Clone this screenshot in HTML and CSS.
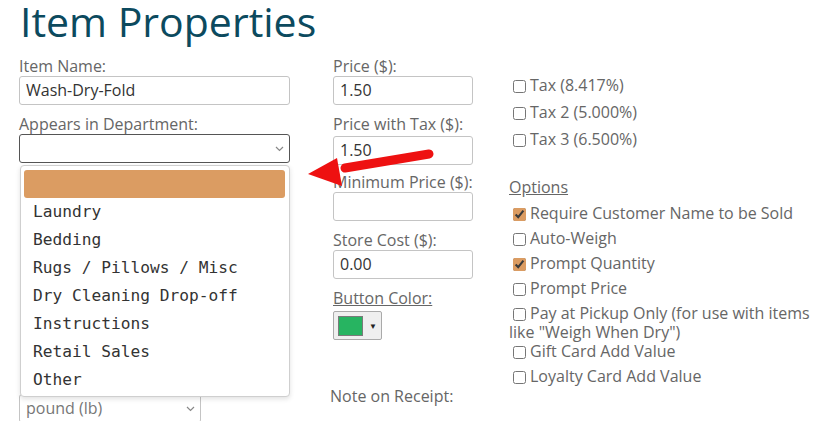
FILE: index.html
```html
<!DOCTYPE html>
<html>
<head>
<meta charset="utf-8">
<link rel="stylesheet" href="styles.css">
</head>
<body>
<div class="page">
  <h1 class="title">Item Properties</h1>
  <div class="grid">
    <div class="col col-left">
      <div class="field">
        <div class="label">Item Name:</div>
        <div class="input wide">Wash-Dry-Fold</div>
      </div>
      <div class="field dept">
        <div class="label">Appears in Department:</div>
        <div class="input wide select focused">
          <span></span>
          <svg class="chev" width="9" height="6" viewBox="0 0 9 6"><path d="M1 1l3.5 3.5L8 1" fill="none" stroke="#888" stroke-width="1.2"/></svg>
        </div>
        <div class="menu">
          <div class="opt active"></div>
          <div class="opt">Laundry</div>
          <div class="opt">Bedding</div>
          <div class="opt">Rugs / Pillows / Misc</div>
          <div class="opt">Dry Cleaning Drop-off</div>
          <div class="opt">Instructions</div>
          <div class="opt">Retail Sales</div>
          <div class="opt">Other</div>
        </div>
      </div>
      <div class="hidden-area"></div>
      <div class="input unit select">
        <span class="muted">pound (lb)</span>
        <svg class="chev" width="9" height="6" viewBox="0 0 9 6"><path d="M1 1l3.5 3.5L8 1" fill="none" stroke="#888" stroke-width="1.2"/></svg>
      </div>
    </div>

    <div class="col col-mid">
      <div class="field">
        <div class="label">Price ($):</div>
        <div class="input narrow">1.50</div>
      </div>
      <div class="field">
        <div class="label">Price with Tax ($):</div>
        <div class="input narrow tax-input">1.50</div>
      </div>
      <div class="field">
        <div class="label">Minimum Price ($):</div>
        <div class="input narrow"></div>
      </div>
      <div class="field">
        <div class="label">Store Cost ($):</div>
        <div class="input narrow">0.00</div>
      </div>
      <div class="field">
        <div class="label under">Button Color:</div>
        <div class="colorbtn">
          <span class="swatch"></span>
          <span class="tri">&#9660;</span>
        </div>
      </div>
      <div class="label note">Note on Receipt:</div>
    </div>

    <div class="col col-right">
      <div class="taxes">
        <label class="row tax"><input type="checkbox">Tax (8.417%)</label>
        <label class="row tax"><input type="checkbox">Tax 2 (5.000%)</label>
        <label class="row tax"><input type="checkbox">Tax 3 (6.500%)</label>
      </div>
      <div class="options-title">Options</div>
      <label class="row opt-row"><input type="checkbox" checked>Require Customer Name to be Sold</label>
      <label class="row opt-row"><input type="checkbox">Auto-Weigh</label>
      <label class="row opt-row"><input type="checkbox" checked>Prompt Quantity</label>
      <label class="row opt-row"><input type="checkbox">Prompt Price</label>
      <label class="row opt-row wrap"><input type="checkbox">Pay at Pickup Only (for use with items like "Weigh When Dry")</label>
      <label class="row opt-row"><input type="checkbox">Gift Card Add Value</label>
      <label class="row opt-row"><input type="checkbox">Loyalty Card Add Value</label>
    </div>
  </div>

  <svg class="arrow" width="833" height="424" viewBox="0 0 833 424">
    <line x1="345" y1="171" x2="429" y2="157" stroke="#ee1111" stroke-width="9" stroke-linecap="round"/>
    <polygon points="308,177 337,161 342,189" fill="#ee1111"/>
  </svg>
</div>
</body>
</html>
```

FILE: styles.css
```css
html, body {
  margin: 0;
  padding: 0;
  background: #fff;
}
body {
  font-family: "Open Sans", "Liberation Sans", sans-serif;
  font-size: 16px;
  color: #666;
  overflow: hidden;
}
.page {
  position: relative;
  width: 833px;
  height: 424px;
  padding-left: 19px;
  box-sizing: border-box;
}
.title {
  margin: -3px 0 0 0;
  font-size: 41px;
  font-weight: 400;
  line-height: 48px;
  color: #0c4a5e;
  padding-left: 1px;
}
.grid {
  display: grid;
  grid-template-columns: 314px 176px 1fr;
  align-items: start;
  margin-top: 11px;
}
.field {
  margin-bottom: 9px;
}
.dept {
  position: relative;
}
.hidden-area {
  height: 222px;
}
.label {
  line-height: 20px;
  color: #666;
}
.under {
  text-decoration: underline;
}
.input {
  box-sizing: border-box;
  height: 29px;
  border: 1px solid #c4c4c4;
  border-radius: 3px;
  padding: 0 6px;
  line-height: 27px;
  color: #333;
  background: #fff;
}
.wide { width: 271px; }
.narrow { width: 140px; }
.unit { width: 182px; }
.tax-input { margin-top: 2px; margin-bottom: -2px; }
.select {
  display: flex;
  align-items: center;
  justify-content: space-between;
  padding-right: 5px;
}
.focused {
  border-color: #555;
}
.muted { color: #777; }
.chev { flex: none; }
.menu {
  position: absolute;
  left: 1px;
  top: 51px;
  width: 270px;
  height: 232px;
  box-sizing: border-box;
  padding: 4px;
  background: #fff;
  border: 1px solid #cfcfcf;
  border-radius: 4px;
  box-shadow: 0 2px 5px rgba(0,0,0,0.12);
  z-index: 2;
}
.opt {
  height: 28px;
  line-height: 27px;
  padding-left: 8px;
  font-family: "DejaVu Sans Mono", "Liberation Mono", monospace;
  font-size: 16.2px;
  color: #333;
  white-space: nowrap;
  border-radius: 3px;
}
.opt.active {
  background: #db9c62;
  margin-left: -1px;
}
.colorbtn {
  box-sizing: border-box;
  margin-top: 3px;
  width: 49px;
  height: 29px;
  border: 1px solid #aaa;
  border-radius: 2px;
  background: #efefef;
  display: flex;
  align-items: center;
  padding-left: 4px;
  gap: 6px;
}
.swatch {
  box-sizing: border-box;
  width: 25px;
  height: 20px;
  background: #27b461;
  border: 1px solid #7a7a7a;
}
.tri {
  font-size: 8px;
  color: #222;
  line-height: 1;
}
.note {
  margin-top: 46px;
  margin-left: -3px;
}
.col-right {
  padding-top: 20px;
}
.row {
  display: block;
  line-height: 19px;
  color: #666;
}
.row input {
  width: 13px;
  height: 13px;
  margin: 0 4px 0 4px;
  vertical-align: -2px;
  accent-color: #db9c62;
}
.tax {
  margin-bottom: 8px;
}
.options-title {
  margin-top: 29px;
  line-height: 19px;
  text-decoration: underline;
  margin-bottom: 7px;
}
.opt-row {
  margin-bottom: 6px;
}
.opt-row.wrap {
  margin-bottom: 0;
}
.arrow {
  position: absolute;
  left: 0;
  top: 0;
  pointer-events: none;
  z-index: 3;
}
```
